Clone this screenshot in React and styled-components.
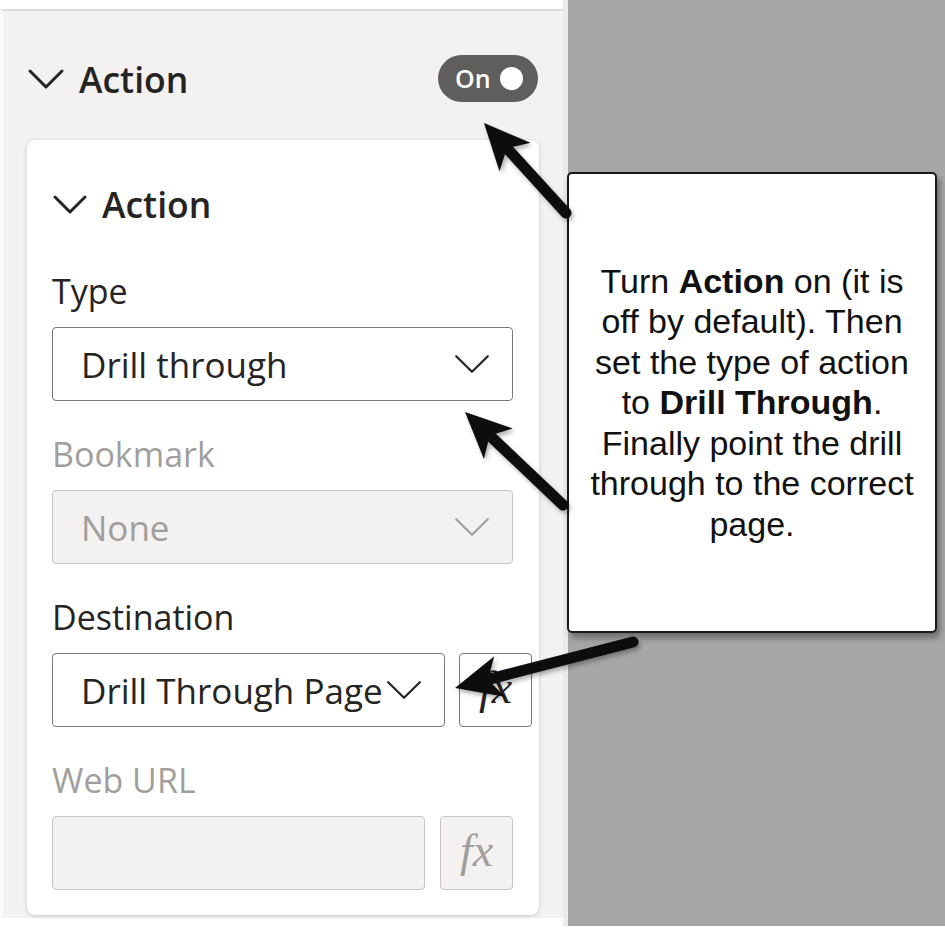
import React from "react";
import styled, { createGlobalStyle } from "styled-components";

const Global = createGlobalStyle`
  html, body { margin: 0; padding: 0; background: #ffffff; }
  body { font-family: "Open Sans", "Noto Sans", sans-serif; color: #252423; }
`;

const Page = styled.div`
  position: relative;
  display: flex;
  align-items: flex-start;
  width: 945px;
  height: 932px;
  background: #ffffff;
  overflow: hidden;
`;

const Pane = styled.section`
  box-sizing: border-box;
  width: 563px;
  height: 909px;
  margin-top: 9px;
  border-top: 2px solid #dedcdb;
  border-left: 3px solid #fafafa;
  background: #f3f2f1;
  padding: 44px 25px 0 24px;
`;

const Divider = styled.div`
  width: 5px;
  height: 926px;
  background: #ecebea;
`;

const Canvas = styled.div`
  box-sizing: border-box;
  flex: 1;
  height: 926px;
  background: #a6a6a6;
  padding-top: 172px;
`;

const PaneHeader = styled.div`
  display: flex;
  align-items: center;
  justify-content: space-between;
  height: 47px;
`;

const Title = styled.h2`
  display: flex;
  align-items: center;
  gap: 14px;
  margin: 0;
  font-size: 35.5px;
  font-weight: 600;
  line-height: 48px;
  color: #252423;
`;

const Toggle = styled.div`
  box-sizing: border-box;
  display: flex;
  align-items: center;
  gap: 9px;
  width: 100px;
  height: 47px;
  padding-left: 17px;
  border-radius: 24px;
  background: #605e5c;
`;

const ToggleText = styled.span`
  font-size: 25px;
  font-weight: 600;
  color: #ffffff;
  line-height: 1;
`;

const Knob = styled.span`
  width: 23px;
  height: 23px;
  border-radius: 50%;
  background: #ffffff;
`;

const Card = styled.div`
  box-sizing: border-box;
  width: 512px;
  margin-top: 38px;
  padding: 40px 25px 25px 25px;
  background: #ffffff;
  border-radius: 8px;
  box-shadow: 0 1px 4px rgba(0, 0, 0, 0.16), 0 0 1px rgba(0, 0, 0, 0.08);
`;

const Field = styled.div`
  margin-top: ${(p) => (p.$first ? 41 : 31)}px;
`;

const Label = styled.div`
  font-size: 34px;
  line-height: 44px;
  margin-bottom: 14px;
  color: ${(p) => (p.$disabled ? "#a19f9d" : "#252423")};
`;

const Row = styled.div`
  display: flex;
  gap: ${(p) => p.$gap || 14}px;
`;

const Select = styled.div`
  box-sizing: border-box;
  flex-shrink: 0;
  display: flex;
  align-items: center;
  justify-content: space-between;
  width: ${(p) => p.$w}px;
  height: 74px;
  padding: 0 22px 0 28px;
  border: 1.5px solid ${(p) => (p.$disabled ? "#c8c6c4" : "#7a7876")};
  border-radius: 4px;
  background: ${(p) => (p.$disabled ? "#f3f2f1" : "#ffffff")};
  color: ${(p) => (p.$disabled ? "#a19f9d" : "#252423")};
  font-size: 35px;
  white-space: nowrap;
`;

const FxButton = styled.div`
  box-sizing: border-box;
  flex-shrink: 0;
  display: flex;
  align-items: center;
  justify-content: center;
  width: 73px;
  height: 74px;
  border: 1.5px solid ${(p) => (p.$disabled ? "#c8c6c4" : "#7a7876")};
  border-radius: 4px;
  background: ${(p) => (p.$disabled ? "#f3f2f1" : "#ffffff")};
  color: ${(p) => (p.$disabled ? "#a19f9d" : "#252423")};
  font-family: "Liberation Serif", "DejaVu Serif", serif;
  font-style: italic;
  font-size: 46px;
  line-height: 1;
  padding-bottom: 4px;
`;

const Callout = styled.div`
  box-sizing: border-box;
  display: flex;
  align-items: center;
  justify-content: center;
  width: 370px;
  height: 461px;
  margin-left: -1px;
  border: 2px solid #1a1a1a;
  border-radius: 5px;
  background: #ffffff;
  box-shadow: 3px 5px 6px rgba(0, 0, 0, 0.35);
  font-family: "Liberation Sans", Arial, sans-serif;
  font-size: 34px;
  line-height: 40.5px;
  text-align: center;
  color: #111111;
  white-space: nowrap;
`;

const Overlay = styled.svg`
  position: absolute;
  left: 0;
  top: 0;
  pointer-events: none;
`;

const Chevron = ({ w = 36, h = 20, sw = 3, color = "#252423" }) => (
  <svg width={w} height={h} viewBox={`0 0 ${w} ${h}`} fill="none">
    <polyline
      points={`${sw},${sw} ${w / 2},${h - sw} ${w - sw},${sw}`}
      stroke={color}
      strokeWidth={sw}
      strokeLinecap="round"
      strokeLinejoin="round"
    />
  </svg>
);

function Arrow({ tail, tip }) {
  const dx = tail[0] - tip[0];
  const dy = tail[1] - tip[1];
  const len = Math.hypot(dx, dy);
  const ux = dx / len;
  const uy = dy / len;
  const px = -uy;
  const py = ux;
  const headLen = 46;
  const half = 21;
  const notch = 34;
  const bx = tip[0] + ux * headLen;
  const by = tip[1] + uy * headLen;
  const nx = tip[0] + ux * notch;
  const ny = tip[1] + uy * notch;
  const pts = [
    [tip[0], tip[1]],
    [bx + px * half, by + py * half],
    [nx, ny],
    [bx - px * half, by - py * half],
  ]
    .map((p) => p.join(","))
    .join(" ");
  return (
    <g>
      <line
        x1={tail[0]}
        y1={tail[1]}
        x2={nx}
        y2={ny}
        stroke="#0a0a0a"
        strokeWidth="11"
        strokeLinecap="round"
      />
      <polygon points={pts} fill="#0a0a0a" />
    </g>
  );
}

export default function App() {
  return (
    <>
      <Global />
      <Page>
        <Pane>
          <PaneHeader>
            <Title>
              <Chevron w={38} h={22} />
              Action
            </Title>
            <Toggle>
              <ToggleText>On</ToggleText>
              <Knob />
            </Toggle>
          </PaneHeader>
          <Card>
            <Title>
              <Chevron w={36} h={21} />
              Action
            </Title>
            <Field $first>
              <Label>Type</Label>
              <Row>
                <Select $w={461}>
                  Drill through
                  <Chevron w={36} h={20} sw={2.2} />
                </Select>
              </Row>
            </Field>
            <Field>
              <Label $disabled>Bookmark</Label>
              <Row>
                <Select $w={461} $disabled>
                  None
                  <Chevron w={36} h={20} sw={2.2} color="#a19f9d" />
                </Select>
              </Row>
            </Field>
            <Field>
              <Label>Destination</Label>
              <Row $gap={14}>
                <Select $w={393}>
                  Drill Through Page
                  <Chevron w={36} h={20} sw={2.2} />
                </Select>
                <FxButton>fx</FxButton>
              </Row>
            </Field>
            <Field>
              <Label $disabled>Web URL</Label>
              <Row $gap={15}>
                <Select $w={373} $disabled />
                <FxButton $disabled>fx</FxButton>
              </Row>
            </Field>
          </Card>
        </Pane>
        <Divider />
        <Canvas>
          <Callout>
            <div>
              Turn <b>Action</b> on (it is
              <br />
              off by default). Then
              <br />
              set the type of action
              <br />
              to <b>Drill Through</b>.
              <br />
              Finally point the drill
              <br />
              through to the correct
              <br />
              page.
            </div>
          </Callout>
        </Canvas>
        <Overlay width="945" height="932" viewBox="0 0 945 932">
          <defs>
            <filter id="sh" x="-10%" y="-10%" width="130%" height="130%">
              <feDropShadow dx="2" dy="3" stdDeviation="2" floodColor="#000" floodOpacity="0.3" />
            </filter>
          </defs>
          <g filter="url(#sh)">
            <Arrow tail={[566, 213]} tip={[484, 123]} />
            <Arrow tail={[563, 505]} tip={[465, 412]} />
            <Arrow tail={[633, 642]} tip={[455, 688]} />
          </g>
        </Overlay>
      </Page>
    </>
  );
}
